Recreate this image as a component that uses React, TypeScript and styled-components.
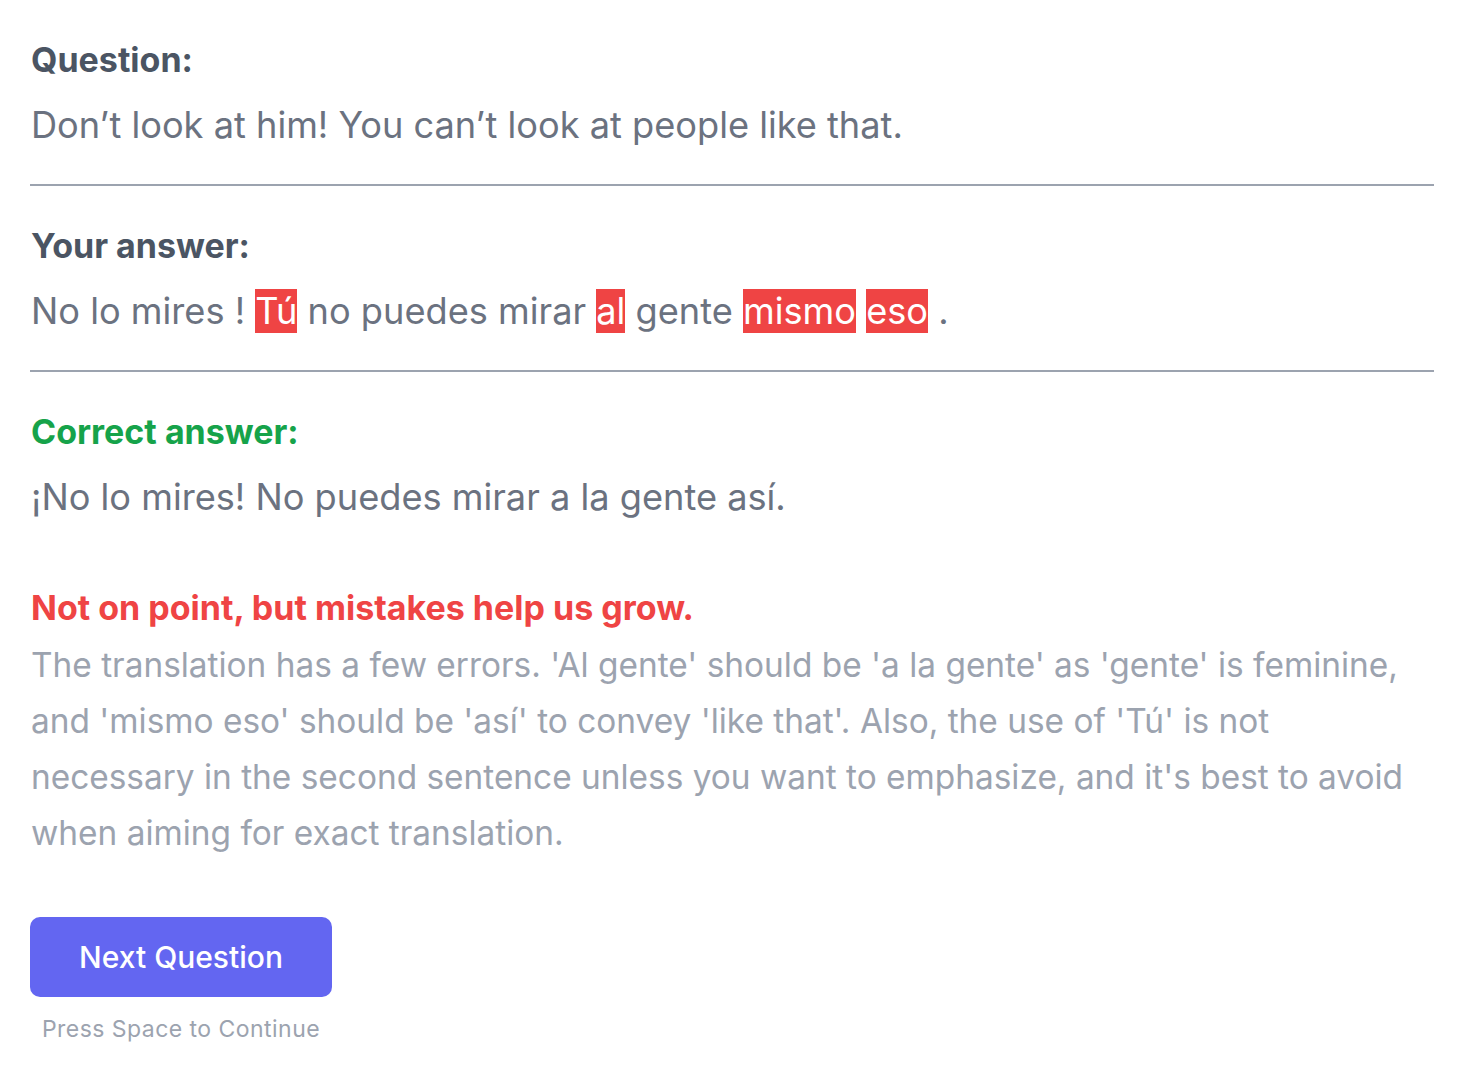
import styled, { createGlobalStyle } from 'styled-components'

const GlobalStyle = createGlobalStyle`
  html, body {
    margin: 0;
    padding: 0;
    background: #ffffff;
  }
  body {
    font-family: Inter, "Noto Sans", "Liberation Sans", sans-serif;
    -webkit-font-smoothing: antialiased;
  }
`

const Page = styled.main`
  width: 1404px;
  padding: 40px 0 0 30px;
`

interface SectionProps {
  $divider?: boolean
}

const Section = styled.section<SectionProps>`
  display: flex;
  flex-direction: column;
  gap: 19px;
  padding-bottom: ${({ $divider }: SectionProps) => ($divider ? '33px' : '0')};
  margin-bottom: ${({ $divider }: SectionProps) => ($divider ? '40px' : '0')};
  border-bottom: ${({ $divider }: SectionProps) => ($divider ? '2px solid #9ca3af' : 'none')};
`

type Tone = 'gray' | 'green' | 'red'

const toneColor: Record<Tone, string> = {
  gray: '#4b5563',
  green: '#16a34a',
  red: '#ef4444',
}

const Label = styled.h2<{ $tone: Tone }>`
  margin: 0;
  padding-left: 1px;
  font-size: 34px;
  line-height: 40px;
  font-weight: 700;
  color: ${({ $tone }) => toneColor[$tone]};
`

const Sentence = styled.p`
  margin: 0;
  padding-left: 1px;
  font-size: 36.2px;
  line-height: 52px;
  color: #6b7280;
`

const Wrong = styled.span`
  color: #ffffff;
  background: #ef4444;
`

const Feedback = styled.section`
  display: flex;
  flex-direction: column;
  gap: 9px;
  margin-top: 65px;
`

const Explanation = styled.p`
  margin: 0;
  padding-left: 1px;
  max-width: 1388px;
  font-size: 33.4px;
  line-height: 56px;
  color: #9ca3af;
`

const Actions = styled.div`
  display: inline-flex;
  flex-direction: column;
  align-items: center;
  gap: 16px;
  margin-top: 56px;
`

const NextButton = styled.button`
  width: 302px;
  height: 80px;
  font-family: inherit;
  font-size: 30px;
  font-weight: 500;
  color: #ffffff;
  background: #6366f1;
  border: none;
  border-radius: 10px;
  cursor: pointer;
`

const Hint = styled.span`
  font-size: 23px;
  line-height: 32px;
  color: #9ca3af;
  letter-spacing: 0.02em;
`

const answer: { text: string; wrong?: boolean }[] = [
  { text: 'No' },
  { text: 'lo' },
  { text: 'mires' },
  { text: '!' },
  { text: 'Tú', wrong: true },
  { text: 'no' },
  { text: 'puedes' },
  { text: 'mirar' },
  { text: 'al', wrong: true },
  { text: 'gente' },
  { text: 'mismo', wrong: true },
  { text: 'eso', wrong: true },
  { text: '.' },
]

export default function App() {
  return (
    <>
      <GlobalStyle />
      <Page>
        <Section $divider>
          <Label $tone="gray">Question:</Label>
          <Sentence>Don’t look at him! You can’t look at people like that.</Sentence>
        </Section>
        <Section $divider>
          <Label $tone="gray">Your answer:</Label>
          <Sentence>
            {answer.map((w, i) => (
              <span key={i}>
                {w.wrong ? <Wrong>{w.text}</Wrong> : w.text}
                {i < answer.length - 1 ? ' ' : ''}
              </span>
            ))}
          </Sentence>
        </Section>
        <Section>
          <Label $tone="green">Correct answer:</Label>
          <Sentence>¡No lo mires! No puedes mirar a la gente así.</Sentence>
        </Section>
        <Feedback>
          <Label $tone="red">Not on point, but mistakes help us grow.</Label>
          <Explanation>
            The translation has a few errors. 'Al gente' should be 'a la gente' as 'gente' is feminine,
            and 'mismo eso' should be 'así' to convey 'like that'. Also, the use of 'Tú' is not
            necessary in the second sentence unless you want to emphasize, and it's best to avoid
            when aiming for exact translation.
          </Explanation>
        </Feedback>
        <Actions>
          <NextButton type="button">Next Question</NextButton>
          <Hint>Press Space to Continue</Hint>
        </Actions>
      </Page>
    </>
  )
}
